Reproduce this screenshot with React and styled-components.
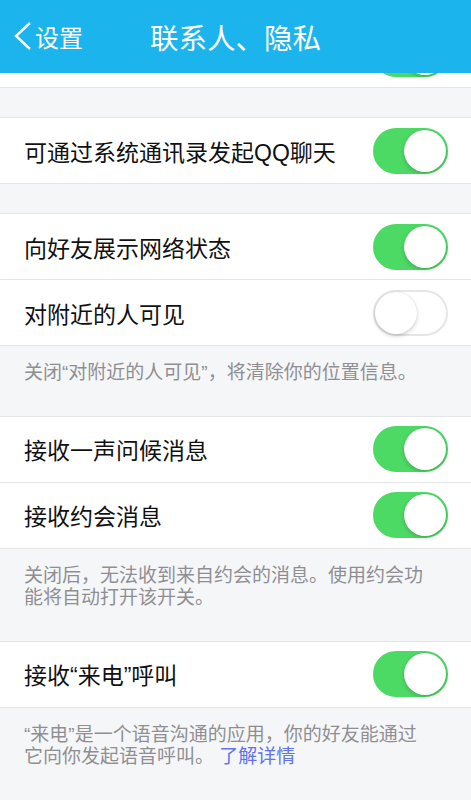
import React from "react";
import styled, { createGlobalStyle } from "styled-components";

const GlobalStyle = createGlobalStyle`
  html, body {
    margin: 0;
    padding: 0;
    background: #f5f6f8;
  }
  body {
    font-family: "Liberation Sans", "Noto Sans CJK SC", sans-serif;
  }
`;

const Page = styled.div`
  width: 471px;
  min-height: 800px;
  background: #f5f6f8;
  overflow: hidden;
`;

const Header = styled.header`
  height: 73px;
  background: #1bb4ec;
  display: grid;
  grid-template-columns: 1fr auto 1fr;
  align-items: center;
  color: #fff;
`;

const Back = styled.div`
  display: flex;
  align-items: center;
  padding-left: 11px;
  font-size: 24px;
  gap: 2px;
  padding-bottom: 1px;
`;

const Title = styled.div`
  font-size: 28.5px;
  padding-bottom: 1px;
`;

const Group = styled.div`
  background: #fff;
  border-top: 1px solid #e3e4e6;
  border-bottom: 1px solid #e3e4e6;
  margin-top: ${(p) => p.$gap || 0}px;
`;

const Row = styled.div`
  height: 65px;
  display: flex;
  align-items: center;
  justify-content: space-between;
  padding: 0 23px 0 24px;
  & + & {
    border-top: 1px solid #e3e4e6;
  }
`;

const Peek = styled.div`
  height: 14px;
  background: #fff;
  border-bottom: 1px solid #e3e4e6;
  overflow: hidden;
  display: flex;
  align-items: flex-end;
  justify-content: flex-end;
  padding-right: 23px;
  & > * {
    margin-bottom: 10px;
  }
`;

const Label = styled.span`
  font-size: 23px;
  color: #111;
`;

const Note = styled.div`
  padding: 16px 40px 31px 24px;
  font-size: 19px;
  line-height: 22.5px;
  color: #8f8f93;
`;

const Link = styled.span`
  color: #6270f2;
`;

const Track = styled.div`
  flex: none;
  position: relative;
  width: 75px;
  height: 46px;
  border-radius: 23px;
  box-sizing: border-box;
  background: ${(p) => (p.$on ? "#4cd964" : "#fff")};
  border: 2px solid ${(p) => (p.$on ? "#4cd964" : "#e6e6e6")};
`;

const Knob = styled.div`
  position: absolute;
  top: 0;
  left: ${(p) => (p.$on ? "29px" : "0")};
  width: 42px;
  height: 42px;
  border-radius: 50%;
  background: #fff;
  box-shadow: 0 2px 4px rgba(0, 0, 0, 0.18), 0 0 1px rgba(0, 0, 0, 0.15);
`;

const Toggle = ({ on }) => (
  <Track $on={on}>
    <Knob $on={on} />
  </Track>
);

const Chevron = () => (
  <svg width="22" height="30" viewBox="0 0 22 30">
    <path d="M19 2 L5 15 L19 28" fill="none" stroke="#fff" strokeWidth="2.4" />
  </svg>
);

const Item = ({ label, on }) => (
  <Row>
    <Label>{label}</Label>
    <Toggle on={on} />
  </Row>
);

export default function App() {
  return (
    <Page>
      <GlobalStyle />
      <Header>
        <Back>
          <Chevron />
          <span>设置</span>
        </Back>
        <Title>联系人、隐私</Title>
        <div />
      </Header>

      <Peek>
        <Toggle on />
      </Peek>

      <Group $gap={29}>
        <Item label="可通过系统通讯录发起QQ聊天" on />
      </Group>

      <Group $gap={29}>
        <Item label="向好友展示网络状态" on />
        <Item label="对附近的人可见" on={false} />
      </Group>
      <Note>关闭“对附近的人可见”，将清除你的位置信息。</Note>

      <Group>
        <Item label="接收一声问候消息" on />
        <Item label="接收约会消息" on />
      </Group>
      <Note>关闭后，无法收到来自约会的消息。使用约会功能将自动打开该开关。</Note>

      <Group>
        <Item label="接收“来电”呼叫" on />
      </Group>
      <Note>
        “来电”是一个语音沟通的应用，你的好友能通过它向你发起语音呼叫。{" "}
        <Link>了解详情</Link>
      </Note>
    </Page>
  );
}
